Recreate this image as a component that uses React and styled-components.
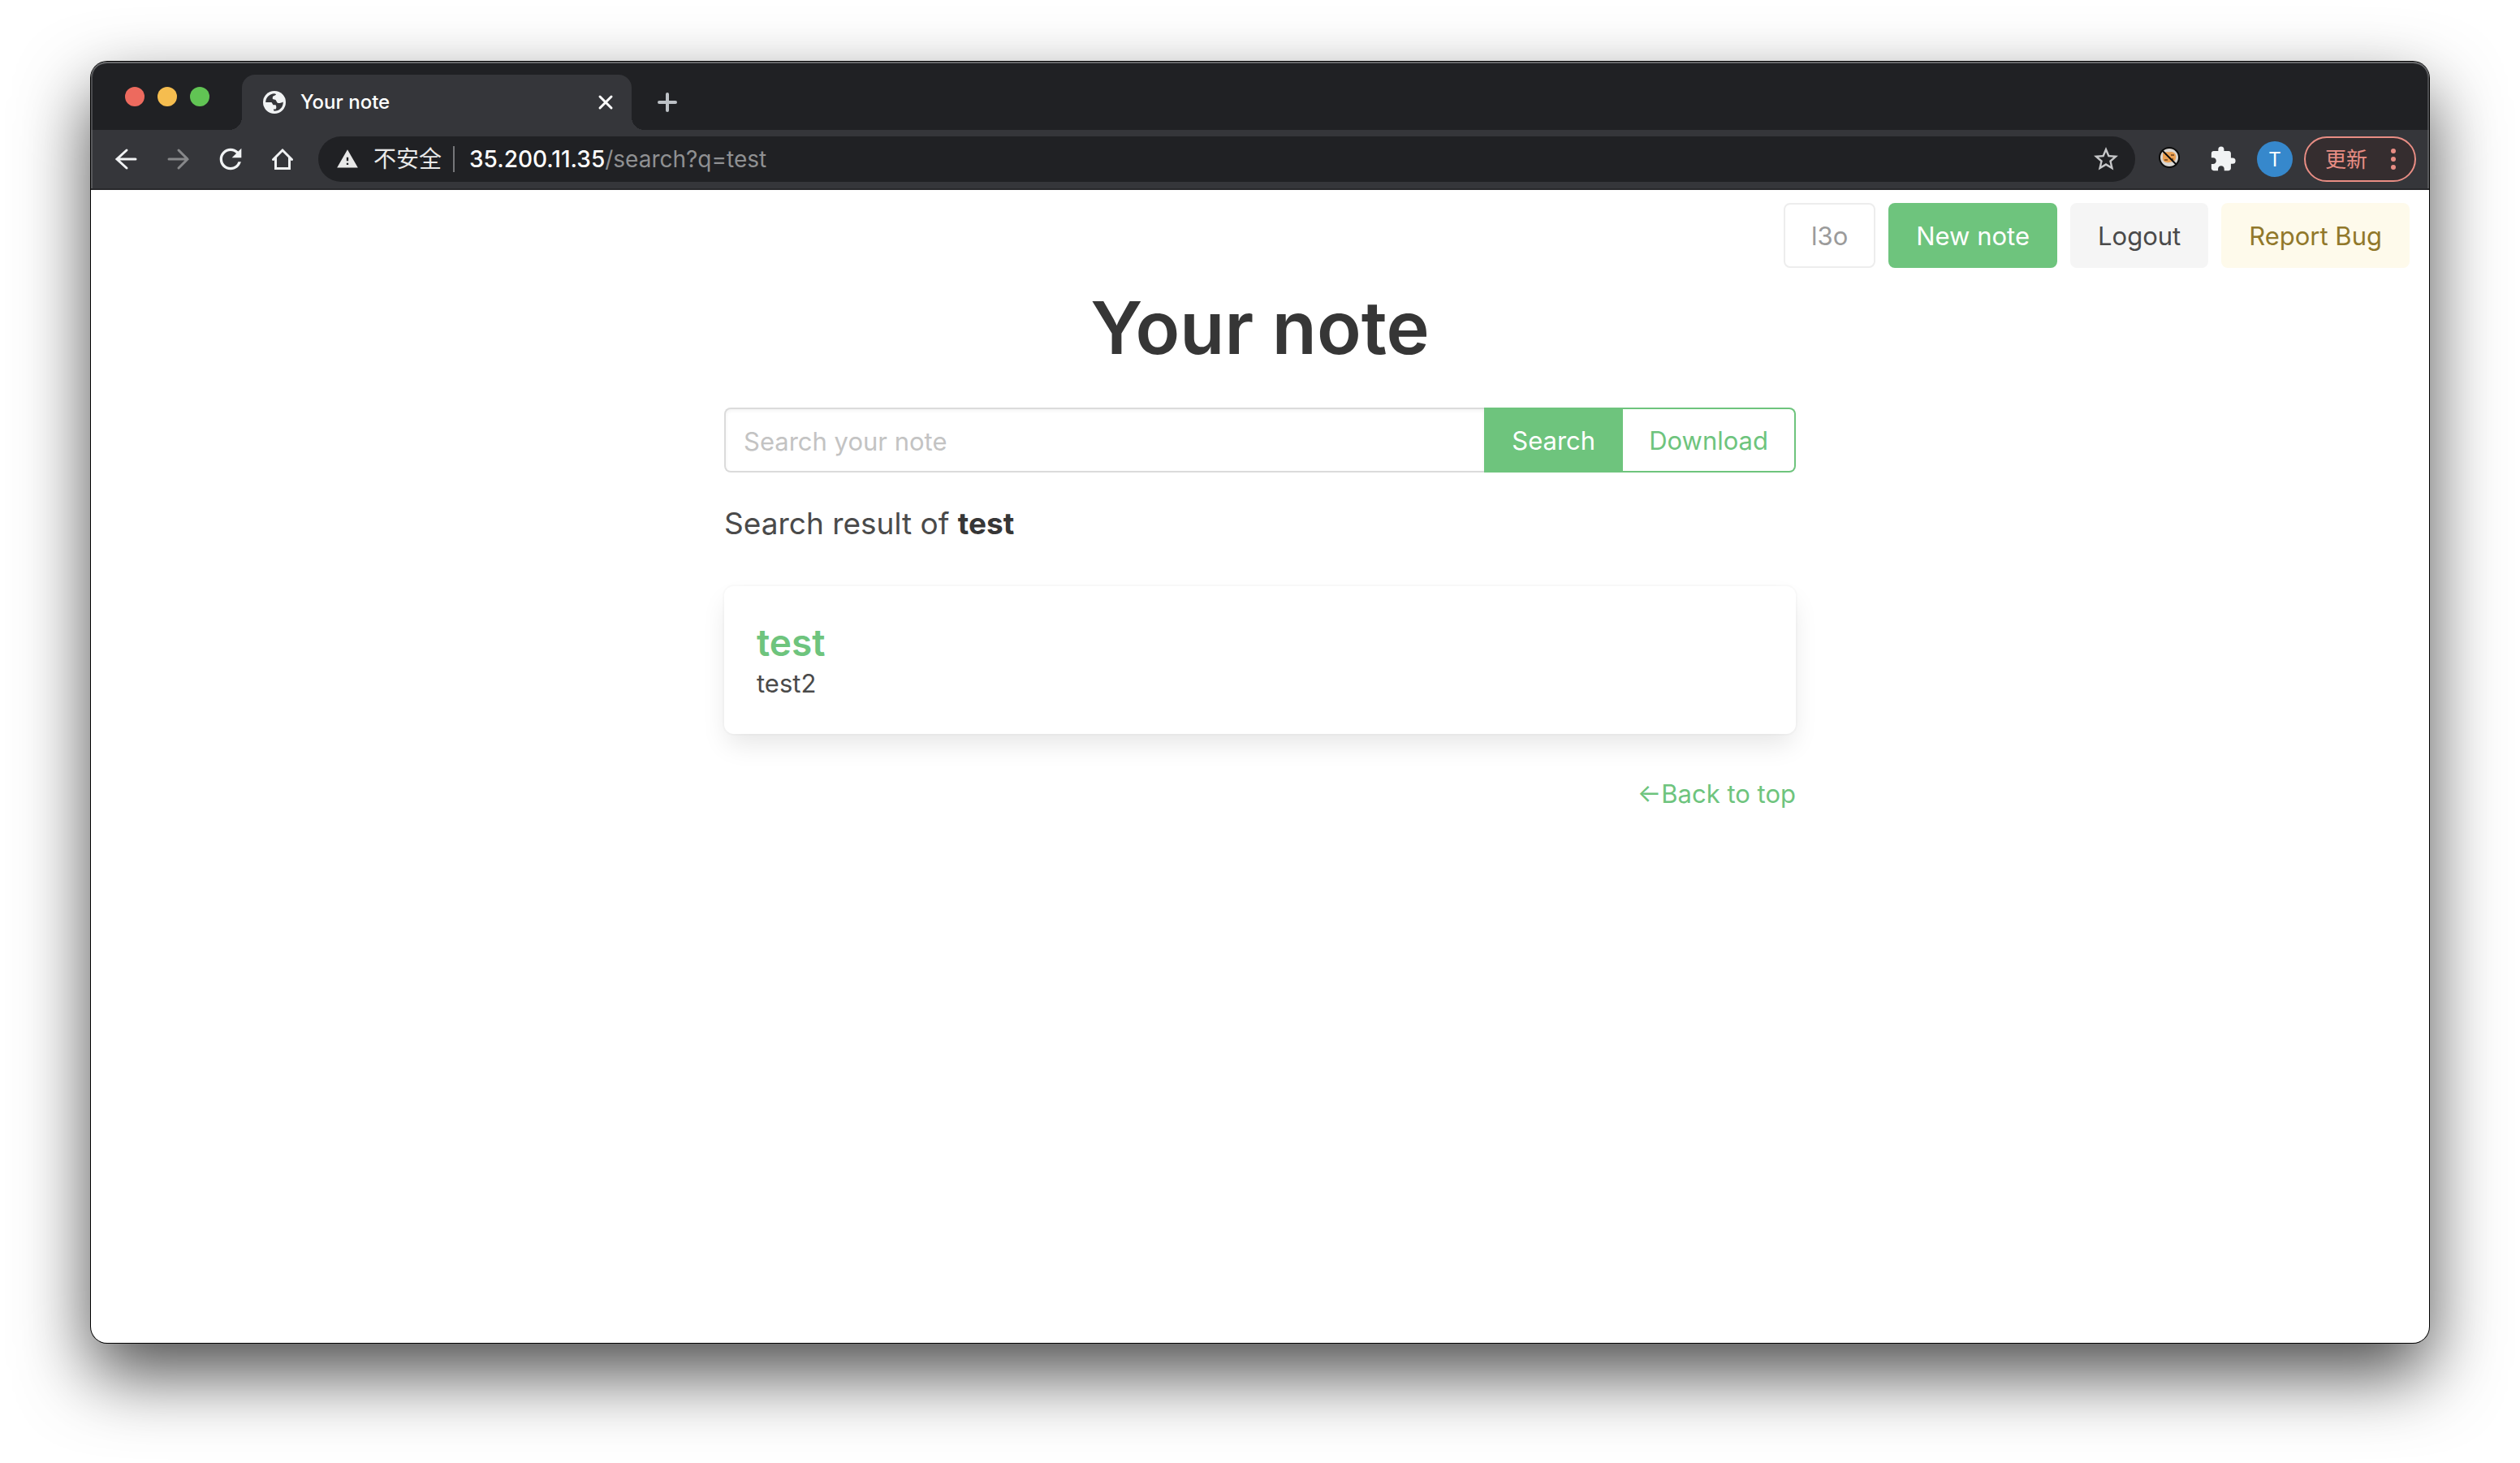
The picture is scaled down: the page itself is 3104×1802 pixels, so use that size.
import React from 'react';
import styled, { createGlobalStyle, css } from 'styled-components';
import { MdExtension, MdRefresh, MdStarBorder, MdWarning } from 'react-icons/md';

const green = '#6ec47d';
const chromeDark = '#202124';
const chromeLight = '#35363a';
const sans = 'Inter, "Noto Sans CJK SC", "Liberation Sans", sans-serif';

const GlobalStyle = createGlobalStyle`
  *, *::before, *::after { box-sizing: border-box; }
  body { margin: 0; background: #fff; font-family: ${sans}; color: #4a4a4a; }
  button, input { font: inherit; margin: 0; }
  h1, h2, p { margin: 0; }
  svg { display: block; flex: none; }
`;

const Desktop = styled.div`
  display: flex;
  min-height: 100vh;
  padding: 76px 112px 148px;
`;

const Window = styled.div`
  flex: 1;
  display: flex;
  flex-direction: column;
  min-width: 0;
  border-radius: 20px;
  background: #fff;
  box-shadow: 0 0 0 1px #000, 0 38px 88px rgba(0, 0, 0, 0.7);
`;

const TabStrip = styled.header`
  display: flex;
  align-items: flex-end;
  height: 84px;
  padding-left: 42px;
  border-radius: 20px 20px 0 0;
  background: ${chromeDark};
  box-shadow: inset 0 2px #67686a, inset 2px 0 #4c4d50, inset -2px 0 #4c4d50;
`;

const WindowControls = styled.div`
  display: flex;
  gap: 16px;
  align-self: center;
  margin: 2px 40px 0 0;
`;

const WindowControl = styled.button`
  width: 24px;
  height: 24px;
  padding: 0;
  border: 0;
  border-radius: 50%;
  background: ${(p) => p.$color};
`;

const Tab = styled.div`
  position: relative;
  display: flex;
  align-items: center;
  width: 480px;
  height: 68px;
  padding: 0 20px 0 26px;
  border-radius: 16px 16px 0 0;
  background: ${chromeLight};
  color: #fff;
  font-size: 24px;
  font-weight: 500;

  &::before, &::after {
    content: '';
    position: absolute;
    bottom: 0;
    width: 16px;
    height: 16px;
  }
  &::before {
    left: -16px;
    background: radial-gradient(circle at 0 0, transparent 16px, ${chromeLight} 16px);
  }
  &::after {
    right: -16px;
    background: radial-gradient(circle at 100% 0, transparent 16px, ${chromeLight} 16px);
  }
`;

const TabTitle = styled.span`
  flex: 1;
  margin-left: 18px;
  padding-bottom: 2px;
`;

const IconButton = styled.button`
  display: flex;
  align-items: center;
  justify-content: center;
  flex: none;
  width: ${(p) => p.$size}px;
  height: ${(p) => p.$size}px;
  padding: 0;
  border: 0;
  background: none;
  color: ${(p) => p.$color || '#f1f3f4'};
`;

const NewTab = styled(IconButton)`
  align-self: flex-end;
  margin: 0 0 12px 22px;
`;

const Toolbar = styled.div`
  display: flex;
  align-items: center;
  height: 74px;
  padding: 0 16px 0 22px;
  border-bottom: 2px solid #28282b;
  background: ${chromeLight};
  box-shadow: inset 2px 0 #58595c, inset -2px 0 #58595c;
`;

const NavButtons = styled.div`
  display: flex;
  gap: 20px;
  margin-right: 22px;
`;

const AddressBar = styled.div`
  flex: 1;
  display: flex;
  align-items: center;
  height: 56px;
  padding: 0 14px 0 22px;
  border-radius: 28px;
  background: ${chromeDark};
  font-size: 28px;
  color: #e8eaed;
`;

const Insecure = styled.button`
  display: flex;
  align-items: center;
  gap: 18px;
  padding: 0 14px 0 0;
  height: 32px;
  border: 0;
  border-right: 2px solid #757679;
  background: none;
  color: #e8e8e8;
  font-size: 28px;
  line-height: 32px;
`;

const Address = styled.button`
  flex: 1;
  padding: 0 0 0 18px;
  border: 0;
  background: none;
  text-align: left;
  color: #8f9092;
`;

const Host = styled.span`
  color: #fff;
  font-weight: 500;
`;

const Actions = styled.div`
  display: flex;
  align-items: center;
  margin-left: 20px;
`;

const Extensions = styled.div`
  display: flex;
  gap: 22px;
`;

const Avatar = styled.button`
  width: 44px;
  height: 44px;
  margin: 0 14px 0 20px;
  padding: 0;
  border: 0;
  border-radius: 50%;
  background: #3688cc;
  color: #fff;
  font-size: 24px;
`;

const Update = styled.button`
  display: flex;
  align-items: center;
  justify-content: space-between;
  width: 138px;
  height: 56px;
  padding: 0 23px 0 24px;
  border: 2px solid #e88d84;
  border-radius: 28px;
  background: #352d2f;
  color: #e88d84;
  font-size: 26px;
`;

const UpdateLabel = styled.span`
  padding-bottom: 3px;
`;

const Page = styled.div`
  flex: 1;
  padding: 16px 24px;
  font-size: 31px;
  line-height: 48px;
`;

const AccountNav = styled.nav`
  display: flex;
  justify-content: flex-end;
  gap: 16px;
`;

const tones = {
  ghost: css`background: #fff; border-color: #ededed; color: #9b9b9b;`,
  primary: css`background: ${green}; border-color: ${green}; color: #fff;`,
  outline: css`background: #fff; border-color: ${green}; color: ${green};`,
  light: css`background: #f5f5f5; border-color: #f5f5f5; color: #4a4a4a;`,
  warning: css`background: #fefaeb; border-color: #fefaeb; color: #91782a;`,
};

const Button = styled.button`
  height: 80px;
  padding: 2px 32px 0;
  border: 2px solid;
  border-radius: 8px;
  line-height: 48px;
  white-space: nowrap;
  ${(p) => tones[p.$tone]}
`;

const Content = styled.main`
  max-width: 1320px;
  margin: 0 auto;
`;

const Title = styled.h1`
  margin-top: 20px;
  color: #363636;
  font-size: 90px;
  font-weight: 600;
  line-height: 108px;
  text-align: center;
`;

const SearchForm = styled.form`
  display: flex;
  margin-top: 44px;

  ${Button}:nth-of-type(1) { border-radius: 0; }
  ${Button}:nth-of-type(2) { border-radius: 0 8px 8px 0; border-left: 0; }
`;

const SearchInput = styled.input`
  flex: 1;
  min-width: 0;
  height: 80px;
  padding: 2px 22px 0;
  border: 2px solid #dbdbdb;
  border-right: 0;
  border-radius: 8px 0 0 8px;
  background: #fff;
  box-shadow: inset 0 2px 4px rgba(10, 10, 10, 0.05);
  color: #363636;
  outline: 0;
  &::placeholder { color: #c3c3c3; opacity: 1; }
`;

const ResultHeading = styled.p`
  margin-top: 33px;
  font-size: 37px;
  line-height: 60px;
  strong { color: #363636; font-weight: 700; }
`;

const Card = styled.article`
  margin-top: 47px;
  padding: 42px 40px 38px;
  border-radius: 12px;
  background: #fff;
  box-shadow: 0 16px 32px -4px rgba(10, 10, 10, 0.1), 0 0 0 2px rgba(10, 10, 10, 0.02);
`;

const NoteTitle = styled.h2`
  font-size: 46px;
  font-weight: 600;
  line-height: 54px;
`;

const Link = styled.a`
  color: ${green};
  text-decoration: none;
`;

const Back = styled.p`
  margin-top: 50px;
  text-align: right;
`;

const Stroke = ({ size, width = 3, d, ...rest }) => (
  <svg width={size} height={size} viewBox={`0 0 ${size} ${size}`} fill="none" stroke="currentColor"
    strokeWidth={width} strokeLinecap="round" aria-hidden="true" {...rest}>
    <path d={d} />
  </svg>
);

const GlobeIcon = () => (
  <svg width="28" height="28" viewBox="0 0 28 28" aria-hidden="true">
    <circle cx="14" cy="14" r="14" fill="#f1f3f4" />
    <path
      d="M3.200 14C3.300 8 8 3.400 14 3.200L16 4C16 6 11.800 5.500 11.800 8V10L15.500 11L17.500 14.500C19.500 15.500 22 15 24.800 13.500C25 20 20 25 13.500 24.800L12.800 22.500H15.500C16.800 21 16.500 19 15.500 17.300H12.500L10.500 14Z"
      fill={chromeLight}
    />
  </svg>
);

const CookieIcon = () => (
  <svg width="28" height="32" viewBox="0 0 28 32" aria-hidden="true">
    <circle cx="14" cy="14" r="12" fill="#d9d6d2" stroke="#0c0c0c" strokeWidth="2" />
    <path d="M6 9C9 6 12 8 16 7C21 7 23 11 22 15C21 20 17 19 14 20C9 21 5 18 6 14Z" fill="#eba052" />
    <path d="M9 10h2M16 11h4M8 17h4M17 16h2" stroke="#8a5a2c" strokeWidth="2" />
    <path d="M5 5l18 18" stroke="#0c0c0c" strokeWidth="2" />
  </svg>
);

export default function App() {
  return (
    <>
      <GlobalStyle />
      <Desktop>
        <Window>
          <TabStrip>
            <WindowControls>
              <WindowControl $color="#ed6a5e" aria-label="Close window" />
              <WindowControl $color="#f5bd4f" aria-label="Minimize window" />
              <WindowControl $color="#61c454" aria-label="Zoom window" />
            </WindowControls>
            <Tab>
              <GlobeIcon />
              <TabTitle>Your note</TabTitle>
              <IconButton $size={24} $color="#fff" aria-label="Close tab">
                <Stroke size={24} d="M5 5L19 19M19 5L5 19" />
              </IconButton>
            </Tab>
            <NewTab $size={44} $color="#bdc1c6" aria-label="New tab">
              <Stroke size={28} width={4} d="M14 4V24M4 14H24" />
            </NewTab>
          </TabStrip>

          <Toolbar>
            <NavButtons>
              <IconButton $size={44} aria-label="Back">
                <Stroke size={32} d="M27 16H4M16 5L4 16L16 27" />
              </IconButton>
              <IconButton $size={44} $color="#87888a" aria-label="Forward">
                <Stroke size={32} d="M4 16H27M16 5L27 16L16 27" />
              </IconButton>
              <IconButton $size={44} aria-label="Reload">
                <MdRefresh size={40} />
              </IconButton>
              <IconButton $size={44} aria-label="Home">
                <Stroke size={32} width={3} strokeLinejoin="miter" d="M4.500 16.500L16 5L27.500 16.500M7.500 14V27.500H24.500V14" />
              </IconButton>
            </NavButtons>
            <AddressBar>
              <Insecure>
                <MdWarning size={28} />
                不安全
              </Insecure>
              <Address><Host>35.200.11.35</Host>/search?q=test</Address>
              <IconButton $size={44} $color="#c6c7c9" aria-label="Bookmark">
                <MdStarBorder size={36} />
              </IconButton>
            </AddressBar>
            <Actions>
              <Extensions>
                <IconButton $size={44} aria-label="Cookie blocker"><CookieIcon /></IconButton>
                <IconButton $size={44} aria-label="Extensions"><MdExtension size={34} /></IconButton>
              </Extensions>
              <Avatar>T</Avatar>
              <Update>
                <UpdateLabel>更新</UpdateLabel>
                <svg width="6" height="26" viewBox="0 0 6 26" fill="currentColor" aria-hidden="true">
                  <circle cx="3" cy="3" r="3" /><circle cx="3" cy="13" r="3" /><circle cx="3" cy="23" r="3" />
                </svg>
              </Update>
            </Actions>
          </Toolbar>

          <Page>
            <AccountNav>
              <Button $tone="ghost" disabled>l3o</Button>
              <Button $tone="primary">New note</Button>
              <Button $tone="light">Logout</Button>
              <Button $tone="warning">Report Bug</Button>
            </AccountNav>
            <Content>
              <Title>Your note</Title>
              <SearchForm onSubmit={(e) => e.preventDefault()}>
                <SearchInput type="text" name="q" aria-label="Search your note" placeholder="Search your note" />
                <Button $tone="primary" type="submit">Search</Button>
                <Button $tone="outline" type="button">Download</Button>
              </SearchForm>
              <ResultHeading>Search result of <strong>test</strong></ResultHeading>
              <Card>
                <NoteTitle><Link href="#note">test</Link></NoteTitle>
                <p>test2</p>
              </Card>
              <Back><Link href="#top">←Back to top</Link></Back>
            </Content>
          </Page>
        </Window>
      </Desktop>
    </>
  );
}
